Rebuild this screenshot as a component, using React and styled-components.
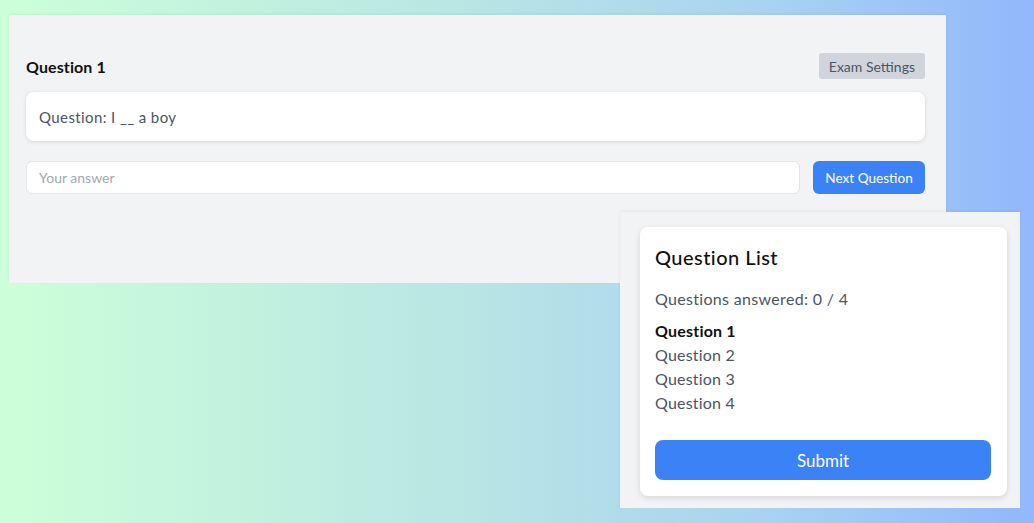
import React from 'react'
import styled, { createGlobalStyle } from 'styled-components'

const GlobalStyle = createGlobalStyle`
    html, body {
        margin: 0;
        padding: 0;
    }
    body {
        font-family: Lato, "Noto Sans", sans-serif;
        color: #111827;
    }
`

const Desktop = styled.div`
    position: relative;
    width: 1034px;
    height: 523px;
    overflow: hidden;
    background: linear-gradient(90deg, #ccffd9 0%, #b9e5e4 45%, #a8d2f1 75%, #92b7fc 100%);
`

// the two captures are laid over the gradient like windows
const Shot = styled.div`
    position: absolute;
    left: ${p => p.left}px;
    top: ${p => p.top}px;
    width: ${p => p.width}px;
    height: ${p => p.height}px;
    box-sizing: border-box;
    background: #f2f3f5;
    box-shadow: 0 -1px 3px rgba(0, 0, 0, 0.06);
`

const ExamPane = styled.div`
    display: flex;
    flex-direction: column;
    padding: 38px 21px 0 17px;
`

const HeaderRow = styled.div`
    display: flex;
    justify-content: space-between;
    align-items: center;
    height: 26px;
`

const Title = styled.h2`
    margin: 0;
    font-size: 16px;
    font-weight: 700;
    letter-spacing: 0.1px;
    color: #111;
`

const GreyButton = styled.button`
    height: 26px;
    padding: 0 10px;
    border: none;
    border-radius: 3px;
    background: #d1d5db;
    color: #4b5563;
    font-family: inherit;
    font-size: 14px;
`

const QuestionCard = styled.div`
    margin-top: 13px;
    height: 49px;
    display: flex;
    align-items: center;
    padding: 0 13px;
    background: #fff;
    border-radius: 8px;
    box-shadow: 0 1px 4px rgba(0, 0, 0, 0.12);
    font-size: 15px;
    letter-spacing: 0.4px;
    color: #4b5563;
`

const AnswerRow = styled.div`
    margin-top: 20px;
    display: flex;
    gap: 13px;
    height: 33px;
`

const AnswerInput = styled.input`
    flex: 1;
    box-sizing: border-box;
    height: 33px;
    padding: 0 12px;
    border: 1px solid #e3e5e8;
    border-radius: 6px;
    background: #fff;
    font-family: inherit;
    font-size: 14px;
    outline: none;

    &::placeholder {
        color: #a3a8b0;
    }
`

const BlueButton = styled.button`
    height: ${p => p.tall ? 40 : 33}px;
    width: ${p => p.wide ? '100%' : '112px'};
    border: none;
    border-radius: ${p => p.tall ? 8 : 6}px;
    background: #3b82f6;
    color: #fff;
    font-family: inherit;
    font-size: ${p => p.tall ? 17 : 13.6}px;
`

const ListPane = styled.div`
    padding: 15px 13px 0 20px;
`

const ListCard = styled.div`
    height: 269px;
    box-sizing: border-box;
    padding: 16px 16px 16px 15px;
    background: #fff;
    border-radius: 8px;
    box-shadow: 0 2px 6px rgba(0, 0, 0, 0.12);
    display: flex;
    flex-direction: column;
`

const ListTitle = styled.h3`
    margin: 0;
    font-size: 20px;
    line-height: 28px;
    font-weight: 500;
    letter-spacing: 0.45px;
    color: #111;
`

const Answered = styled.p`
    margin: 16px 0 0;
    font-size: 16px;
    line-height: 24px;
    letter-spacing: 0.32px;
    color: #4b5563;
`

const Items = styled.ul`
    list-style: none;
    margin: 8px 0 25px;
    padding: 0;
`

const Item = styled.li`
    font-size: 16px;
    line-height: 24px;
    letter-spacing: 0.2px;
    font-weight: ${p => p.active ? 700 : 400};
    color: ${p => p.active ? '#111' : '#4b5563'};
`

const questions = ['Question 1', 'Question 2', 'Question 3', 'Question 4']

const App = () => {
    return (
        <Desktop>
            <GlobalStyle />
            <Shot left={9} top={15} width={937} height={268}>
                <ExamPane>
                    <HeaderRow>
                        <Title>Question 1</Title>
                        <GreyButton>Exam Settings</GreyButton>
                    </HeaderRow>
                    <QuestionCard>Question: I __ a boy</QuestionCard>
                    <AnswerRow>
                        <AnswerInput placeholder="Your answer" />
                        <BlueButton>Next Question</BlueButton>
                    </AnswerRow>
                </ExamPane>
            </Shot>
            <Shot left={620} top={212} width={400} height={296}>
                <ListPane>
                    <ListCard>
                        <ListTitle>Question List</ListTitle>
                        <Answered>Questions answered: 0 / 4</Answered>
                        <Items>
                            {questions.map((q, i) => (
                                <Item key={q} active={i === 0}>{q}</Item>
                            ))}
                        </Items>
                        <BlueButton tall wide>Submit</BlueButton>
                    </ListCard>
                </ListPane>
            </Shot>
        </Desktop>
    )
}

export default App
